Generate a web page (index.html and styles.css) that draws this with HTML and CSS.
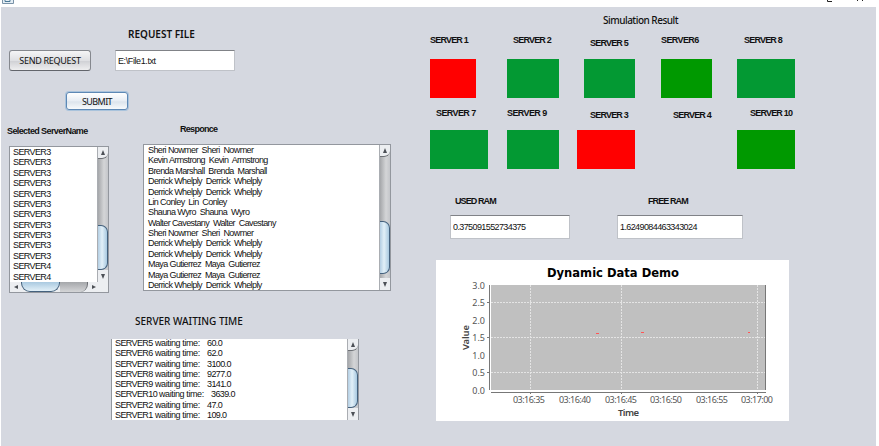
FILE: index.html
```
<!DOCTYPE html>
<html lang="en">
<head>
    <meta charset="UTF-8">
    <meta name="viewport" content="width=device-width, initial-scale=1.0">
    <title>Server Simulation</title>
    <link rel="stylesheet" href="styles.css">
</head>
<body>
    <div class="titlebar">
        <svg class="app-icon" width="12" height="5" viewBox="0 0 12 5">
            <path d="M0.5 0V3.5H11.5V0" fill="#e4eef5" stroke="#7a93a8"/>
            <path d="M3 0V1.5H8V0" fill="none" stroke="#4a7896"/>
        </svg>
        <svg class="window-controls" width="40" height="3" viewBox="0 0 40 3">
            <path d="M1.5 0V1.5H6M31.5 0V1M36.5 0V1" fill="none" stroke="#222"/>
        </svg>
    </div>

    <div class="frame">
        <div class="left">
            <h2 class="request-title">REQUEST FILE</h2>
            <div class="request-row">
                <button class="btn send">SEND REQUEST</button>
                <input class="field file" type="text" value="E:\File1.txt">
            </div>
            <button class="btn submit">SUBMIT</button>

            <div class="lists">
                <div class="selected">
                    <h3>Selected ServerName</h3>
                    <div class="list server-list">
                        <ul>
                            <li>SERVER3</li>
                            <li>SERVER3</li>
                            <li>SERVER3</li>
                            <li>SERVER3</li>
                            <li>SERVER3</li>
                            <li>SERVER3</li>
                            <li>SERVER3</li>
                            <li>SERVER3</li>
                            <li>SERVER3</li>
                            <li>SERVER3</li>
                            <li>SERVER3</li>
                            <li>SERVER4</li>
                            <li>SERVER4</li>
                        </ul>
                        <div class="vbar">
                            <span class="arrow up"></span>
                            <span class="thumb"></span>
                            <span class="arrow down"></span>
                        </div>
                        <div class="hbar">
                            <span class="arrow prev"></span>
                            <span class="hthumb"></span>
                            <span class="htrack"></span>
                            <span class="arrow next"></span>
                        </div>
                    </div>
                </div>
                <div class="response">
                    <h3>Responce</h3>
                    <div class="list response-list">
                        <ul>
                            <li>Sheri Nowmer&nbsp; Sheri&nbsp; Nowmer</li>
                            <li>Kevin Armstrong&nbsp; Kevin&nbsp; Armstrong</li>
                            <li>Brenda Marshall&nbsp; Brenda&nbsp; Marshall</li>
                            <li>Derrick Whelply&nbsp; Derrick&nbsp; Whelply</li>
                            <li>Derrick Whelply&nbsp; Derrick&nbsp; Whelply</li>
                            <li>Lin Conley&nbsp; Lin&nbsp; Conley</li>
                            <li>Shauna Wyro&nbsp; Shauna&nbsp; Wyro</li>
                            <li>Walter Cavestany&nbsp; Walter&nbsp; Cavestany</li>
                            <li>Sheri Nowmer&nbsp; Sheri&nbsp; Nowmer</li>
                            <li>Derrick Whelply&nbsp; Derrick&nbsp; Whelply</li>
                            <li>Derrick Whelply&nbsp; Derrick&nbsp; Whelply</li>
                            <li>Maya Gutierrez&nbsp; Maya&nbsp; Gutierrez</li>
                            <li>Maya Gutierrez&nbsp; Maya&nbsp; Gutierrez</li>
                            <li>Derrick Whelply&nbsp; Derrick&nbsp; Whelply</li>
                        </ul>
                        <div class="vbar">
                            <span class="arrow up"></span>
                            <span class="thumb"></span>
                            <span class="arrow down"></span>
                        </div>
                    </div>
                </div>
            </div>

            <h2 class="waiting-title">SERVER WAITING TIME</h2>
            <div class="list waiting-list">
                <ul>
                    <li><span>SERVER5</span><span>waiting time:</span><span>60.0</span></li>
                    <li><span>SERVER6</span><span>waiting time:</span><span>62.0</span></li>
                    <li><span>SERVER7</span><span>waiting time:</span><span>3100.0</span></li>
                    <li><span>SERVER8</span><span>waiting time:</span><span>9277.0</span></li>
                    <li><span>SERVER9</span><span>waiting time:</span><span>3141.0</span></li>
                    <li class="wide"><span>SERVER10</span><span>waiting time:</span><span>3639.0</span></li>
                    <li><span>SERVER2</span><span>waiting time:</span><span>47.0</span></li>
                    <li><span>SERVER1</span><span>waiting time:</span><span>109.0</span></li>
                </ul>
                <div class="vbar">
                    <span class="arrow up"></span>
                    <span class="thumb"></span>
                    <span class="arrow down"></span>
                </div>
            </div>
        </div>

        <div class="right">
            <h2 class="result-title">Simulation Result</h2>
            <div class="servers">
                <div class="server s1"><h4>SERVER 1</h4><div class="box red"></div></div>
                <div class="server s2"><h4>SERVER 2</h4><div class="box green"></div></div>
                <div class="server s5"><h4>SERVER 5</h4><div class="box green"></div></div>
                <div class="server s6"><h4>SERVER6</h4><div class="box dark"></div></div>
                <div class="server s8"><h4>SERVER 8</h4><div class="box green"></div></div>
                <div class="server s7"><h4>SERVER 7</h4><div class="box green"></div></div>
                <div class="server s9"><h4>SERVER 9</h4><div class="box green"></div></div>
                <div class="server s3"><h4>SERVER 3</h4><div class="box red"></div></div>
                <div class="server s4"><h4>SERVER 4</h4></div>
                <div class="server s10"><h4>SERVER 10</h4><div class="box dark"></div></div>
            </div>

            <div class="ram-row">
                <div class="ram used">
                    <h4>USED RAM</h4>
                    <input class="field" type="text" value="0.375091552734375">
                </div>
                <div class="ram free">
                    <h4>FREE RAM</h4>
                    <input class="field" type="text" value="1.6249084463343024">
                </div>
            </div>

            <svg class="chart" width="353" height="161" viewBox="436 260 353 161">
                <rect x="436" y="260" width="353" height="161" fill="#fff"/>
                <text class="chart-title" x="547" y="276.5" textLength="132" lengthAdjust="spacingAndGlyphs">Dynamic Data Demo</text>
                <rect x="491" y="285" width="275" height="105" fill="#c0c0c0"/>
                <g class="grid">
                    <path d="M530.5 285V390M621.5 285V390M757.5 285V390"/>
                    <path d="M491 302.5H766M491 337.5H766M491 372.5H766"/>
                </g>
                <g class="axis">
                    <path d="M489.5 285V390M491 392.5H766M765.5 285V390"/>
                    <path d="M487 302.5H489M487 337.5H489M487 372.5H489"/>
                    <path d="M530.5 393V394M621.5 393V394M757.5 393V394"/>
                </g>
                <g class="ticks y-ticks">
                    <text x="485" y="289">3.0</text>
                    <text x="485" y="306">2.5</text>
                    <text x="485" y="324">2.0</text>
                    <text x="485" y="341">1.5</text>
                    <text x="485" y="359">1.0</text>
                    <text x="485" y="376">0.5</text>
                    <text x="485" y="394">0.0</text>
                </g>
                <g class="ticks x-ticks">
                    <text x="513" y="403" textLength="32">03:16:35</text>
                    <text x="559" y="403" textLength="32">03:16:40</text>
                    <text x="605" y="403" textLength="32">03:16:45</text>
                    <text x="650" y="403" textLength="32">03:16:50</text>
                    <text x="696" y="403" textLength="32">03:16:55</text>
                    <text x="741" y="403" textLength="32">03:17:00</text>
                </g>
                <text class="axis-label" x="618" y="416" textLength="21">Time</text>
                <text class="axis-label" transform="translate(469 350) rotate(-90)" textLength="25">Value</text>
                <path d="M596 333.5H599M641 332.5H644M748 332.5H750" stroke="#f55"/>
            </svg>
        </div>
    </div>
</body>
</html>
```

FILE: styles.css
```
* {
    box-sizing: border-box;
}

body {
    margin: 0;
    width: 879px;
    height: 446px;
    overflow: hidden;
    background-color: white;
    font-family: "Noto Sans", sans-serif;
    font-size: 9px;
    color: #111;
}

h2, h3, h4, ul {
    margin: 0;
    padding: 0;
    white-space: nowrap;
}

h2, h3, h4 {
    line-height: 12px;
    font-weight: 600;
}

h3, h4 {
    font-family: "Liberation Sans", Arial, sans-serif;
    font-size: 9px;
    font-weight: bold;
}

ul {
    list-style: none;
}

.titlebar {
    display: flex;
    justify-content: space-between;
    align-items: flex-start;
    height: 7px;
    padding: 0 13px 0 2px;
}

.frame {
    display: flex;
    width: 875px;
    height: 439px;
    margin-left: 1px;
    background-color: #d5d8e0;
}

.left {
    width: 429px;
    padding: 21px 0 0 8px;
}

.right {
    width: 446px;
    padding-top: 7px;
}

/* request form */
.request-title {
    margin-left: 119px;
    font-size: 10px;
}

.request-row {
    display: flex;
    gap: 24px;
    margin-top: 10px;
}

.btn {
    display: block;
    padding: 0;
    border: 1px solid #85888e;
    border-radius: 3px;
    background: linear-gradient(#f5f5f6, #dfe0e3 50%, #d1d2d6 55%, #eeeeef);
    font-family: inherit;
    font-size: 9px;
    letter-spacing: -0.3px;
    color: #111;
}

.send {
    width: 82px;
    height: 21px;
    border-bottom-color: #62656b;
}

.submit {
    width: 62px;
    height: 18px;
    margin: 21px 0 0 57px;
    border-color: #5d88b5;
    background: linear-gradient(#fff, #e7edf4 50%, #dce4ec 55%, #f7fafc);
    box-shadow: 0 0 0 1px #a9c3dc;
    letter-spacing: -0.6px;
}

.field {
    display: block;
    border: 1px solid #bfc2c8;
    border-top-color: #808287;
    padding: 0 2px;
    background-color: white;
    font-family: "Liberation Sans", Arial, sans-serif;
    font-size: 9px;
    letter-spacing: -0.6px;
    color: #111;
}

.file {
    width: 120px;
    height: 21px;
    letter-spacing: -0.4px;
}

/* lists */
.lists {
    display: flex;
    height: 168px;
    margin-top: 15px;
}

.selected {
    width: 134px;
}

.selected h3 {
    margin: 0 0 9px -2px;
    letter-spacing: -0.6px;
}

.response h3 {
    margin: -2px 0 9px 37px;
    letter-spacing: -0.7px;
}

.list {
    display: grid;
    grid-template-columns: 1fr 11px;
    overflow: hidden;
    border: 1px solid #93979e;
    background-color: white;
    font-family: "Liberation Sans", Arial, sans-serif;
}

.list ul {
    overflow: hidden;
}

.list li {
    height: 10.38px;
    line-height: 10.38px;
}

.server-list {
    grid-template-rows: 135px 10px;
    width: 100px;
    height: 147px;
}

.server-list ul {
    padding: 0 0 0 3px;
    letter-spacing: -0.6px;
}

.response-list {
    width: 248px;
    height: 147px;
}

.response-list ul {
    padding-left: 4px;
    letter-spacing: -0.6px;
}

.vbar {
    display: flex;
    flex-direction: column;
    align-items: center;
    justify-content: space-between;
    border-left: 1px solid #aaadb2;
    background: linear-gradient(90deg, #a5a7aa, #d4d5d7 60%, #c4c6ca);
}

.arrow {
    display: flex;
    align-items: center;
    justify-content: center;
    width: 100%;
    height: 12px;
    background-color: #eceef1;
}

.arrow::before {
    content: "";
    border: 2.5px solid transparent;
}

.up::before {
    border-bottom: 5px solid #4c5056;
    border-top: 0;
}

.down::before {
    border-top: 5px solid #4c5056;
    border-bottom: 0;
}

.prev::before {
    border-right: 4px solid #4c5056;
    border-left: 0;
}

.next::before {
    border-left: 4px solid #4c5056;
    border-right: 0;
}

.vbar .up {
    border-bottom: 1px solid #6d7075;
    border-radius: 0 0 6px 0;
}

.thumb {
    width: 100%;
    height: 45px;
    margin-top: auto;
    border: 1px solid #44617d;
    border-left: 0;
    border-radius: 0 7px 7px 0;
    background: linear-gradient(90deg, #b3cee3, #e2f0f8 45%, #a9c9e0);
}

.response-list .thumb {
    height: 53px;
    margin-bottom: 4px;
}

.waiting-list .thumb {
    height: 40px;
}

.hbar {
    grid-column: 1 / 3;
    display: flex;
    background-color: #eceef1;
}

.hbar .arrow {
    width: 11px;
    height: 10px;
}

.hthumb {
    width: 39px;
    height: 10px;
    border: 1px solid #44617d;
    border-top: 0;
    border-radius: 0 0 9px 9px;
    background: linear-gradient(#a9c9e0, #e2f0f8);
}

.htrack {
    width: 28px;
    border-right: 1px solid #6d7075;
    border-radius: 0 0 8px 0;
    background: linear-gradient(#a5a7aa, #d4d5d7);
}

.waiting-title {
    margin: 22px 0 0 126px;
    font-size: 10px;
    font-weight: 500;
}

.waiting-list {
    width: 248px;
    height: 81px;
    margin: 12px 0 0 102px;
    border-top: 0;
    border-bottom: 0;
}

.waiting-list ul {
    padding-left: 3px;
    margin-top: -1px;
    letter-spacing: -0.6px;
}

.waiting-list li {
    display: grid;
    grid-template-columns: 40px 52px 1fr;
    height: 10.25px;
    line-height: 10.25px;
}

.waiting-list .wide {
    grid-template-columns: 44px 52px 1fr;
}

.waiting-list li span:nth-child(2) {
    letter-spacing: -0.4px;
}

/* simulation result */
.result-title {
    margin-left: 173px;
    font-size: 10px;
    font-weight: 500;
    letter-spacing: -0.5px;
}

.servers {
    display: grid;
    grid-template-columns: 77px 70px 84px 76px 65px;
    grid-template-rows: 73px 62px;
    padding-top: 8px;
}

.server {
    display: flex;
    flex-direction: column;
}

.server h4 {
    height: 25px;
    letter-spacing: -0.8px;
}

.servers .s7 h4, .servers .s9 h4, .servers .s10 h4, .servers .s3 h4, .servers .s4 h4 {
    height: 23px;
}

.servers .s6 h4, .servers .s7 h4, .servers .s9 h4 {
    letter-spacing: -0.6px;
}

.box {
    height: 39px;
}

.red {
    background-color: #ff0000;
}

.green {
    background-color: #039933;
}

.dark {
    background-color: #009900;
}

.s1 .box { width: 46px; }
.s2 .box, .s9 .box { width: 52px; }
.s5 .box { width: 51px; margin-left: 7px; }
.s6 .box { width: 51px; }
.s8 .box, .s7 .box, .s3 .box, .s10 .box { width: 58px; }

.s2 h4 { padding-left: 6px; }
.s5 h4 { padding: 3px 0 0 13px; }
.s8 h4 { padding-left: 7px; }
.s7 h4 { padding-left: 6px; }
.s3 h4 { padding: 2px 0 0 13px; }
.s4 h4 { padding: 2px 0 0 12px; }
.s10 h4 { padding-left: 13px; }

/* ram */
.ram-row {
    display: flex;
    gap: 47px;
    margin: 26px 0 0 20px;
}

.ram h4 {
    margin-bottom: 8px;
    letter-spacing: -0.9px;
}

.ram .field {
    height: 24px;
}

.used h4 {
    padding-left: 5px;
}

.free h4 {
    padding-left: 31px;
}

.used .field {
    width: 120px;
}

.free .field {
    width: 126px;
}

/* chart */
.chart {
    display: block;
    margin: 21px 0 0 6px;
}

.chart-title {
    font-family: "DejaVu Sans", sans-serif;
    font-size: 13px;
    font-weight: 700;
    fill: #000;
}

.grid {
    fill: none;
    stroke: #e4e4e4;
    stroke-dasharray: 2 1;
}

.axis {
    fill: none;
    stroke: #777;
}

.ticks {
    font-size: 9px;
    fill: #555;
}

.y-ticks {
    text-anchor: end;
}

.axis-label {
    font-size: 9.5px;
    font-weight: 600;
    fill: #444;
}
```
